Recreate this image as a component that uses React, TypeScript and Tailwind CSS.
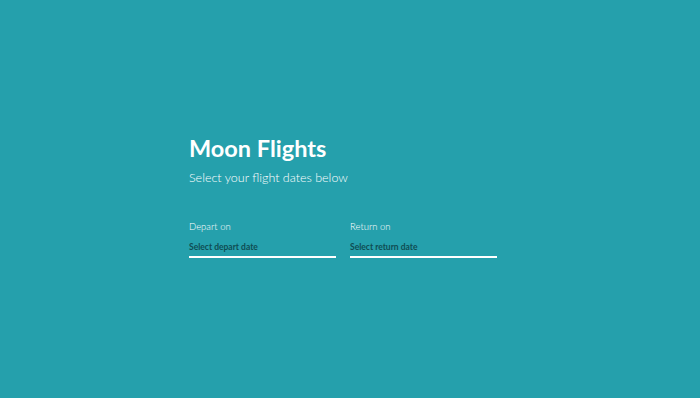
export default function App() {
  return (
    <div className="h-[398px] w-full bg-[#25a0ac] pt-[134px] font-['Lato',sans-serif] text-white">
      <div className="mx-auto w-[322px]">
        <h1 className="text-[23.5px] font-bold leading-[28px]">Moon Flights</h1>
        <p className="mt-[8px] text-[12.5px] font-light leading-[15px]">Select your flight dates below</p>
        <div className="mt-[36px] flex">
          <label className="w-1/2 pr-[14px]">
            <span className="block text-[9.5px] font-light leading-[11px]">Depart on</span>
            <span className="mt-[10px] block border-b-2 border-white pb-[4px] text-[8.5px] font-bold leading-[10px] text-[#0f4d53]">
              Select depart date
            </span>
          </label>
          <label className="w-1/2 pr-[14px]">
            <span className="block text-[9.5px] font-light leading-[11px]">Return on</span>
            <span className="mt-[10px] block border-b-2 border-white pb-[4px] text-[8.5px] font-bold leading-[10px] text-[#0f4d53]">
              Select return date
            </span>
          </label>
        </div>
      </div>
    </div>
  );
}
